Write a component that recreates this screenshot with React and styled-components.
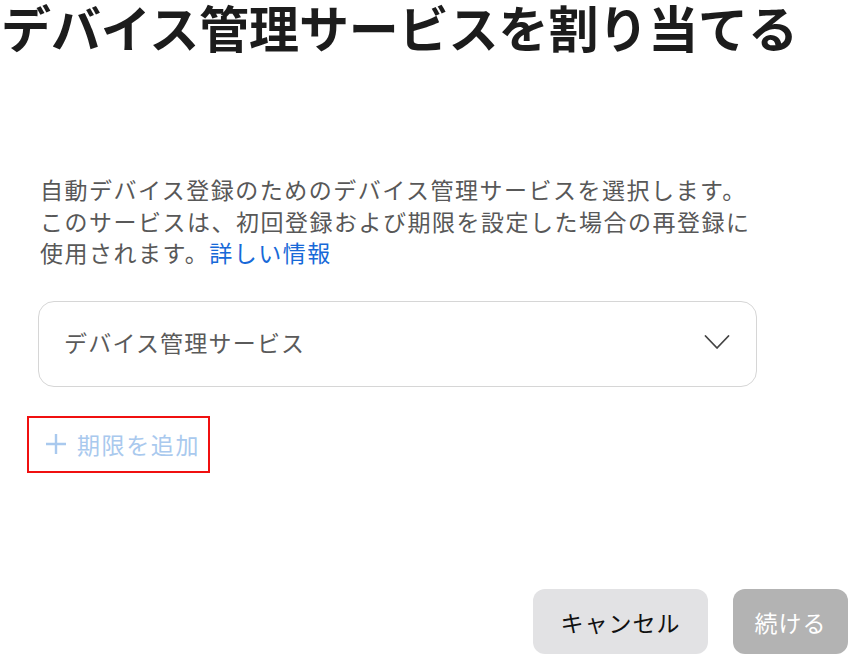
import React from "react";
import styled, { createGlobalStyle } from "styled-components";

const GlobalStyle = createGlobalStyle`
  html, body {
    margin: 0;
    padding: 0;
    background: #ffffff;
  }
  body {
    font-family: "Noto Sans CJK JP", "Noto Sans", sans-serif;
  }
`;

const Page = styled.div`
  display: flex;
  flex-direction: column;
  width: 850px;
  height: 655px;
  overflow: hidden;
`;

const Title = styled.h1`
  margin: 0;
  padding-left: 1px;
  font-size: 50px;
  line-height: 52px;
  font-weight: 700;
  color: #1c1c1c;
  letter-spacing: -0.1px;
  white-space: nowrap;
`;

const Content = styled.div`
  display: flex;
  flex-direction: column;
  align-items: flex-start;
  padding: 0 40px;
`;

const Description = styled.p`
  margin: 122px 0 0;
  width: 722px;
  font-size: 23px;
  line-height: 31.5px;
  letter-spacing: 1.5px;
  color: #585858;
`;

const Link = styled.a`
  color: #1769d8;
  text-decoration: none;
`;

const Select = styled.div`
  box-sizing: border-box;
  display: flex;
  align-items: center;
  justify-content: space-between;
  width: 719px;
  height: 86px;
  margin: 32px 0 0 -2px;
  padding: 0 26px 4px 25px;
  border: 1.5px solid #d6d6d6;
  border-radius: 16px;
  font-size: 23px;
  letter-spacing: 1.2px;
  color: #5a5a5a;
`;

const AddButton = styled.button`
  box-sizing: border-box;
  display: flex;
  align-items: center;
  gap: 10px;
  height: 57px;
  margin: 29px 0 0 -13px;
  padding: 0 8px 0 16px;
  border: 2.5px solid #f01010;
  background: transparent;
  font-family: inherit;
  font-size: 23px;
  letter-spacing: 1.6px;
  color: #a9c9ee;
  cursor: pointer;
`;

const Footer = styled.div`
  display: flex;
  justify-content: flex-end;
  gap: 25px;
  margin-top: auto;
  padding: 0 2px 1px 0;
`;

const ActionButton = styled.button`
  box-sizing: border-box;
  height: 65px;
  width: ${(p) => (p.$primary ? "115px" : "175px")};
  border: none;
  border-radius: 12px;
  background: ${(p) => (p.$primary ? "#b3b3b3" : "#e2e2e4")};
  color: ${(p) => (p.$primary ? "#ffffff" : "#111111")};
  font-family: inherit;
  font-size: 23px;
  letter-spacing: 1px;
`;

function Chevron() {
  return (
    <svg width="26" height="16" viewBox="0 0 26 16" fill="none">
      <path d="M1.5 2l11.5 12L24.5 2" stroke="#444" strokeWidth="1.8" strokeLinecap="round" strokeLinejoin="round" />
    </svg>
  );
}

function Plus() {
  return (
    <svg width="22" height="22" viewBox="0 0 22 22" fill="none">
      <path d="M11 1v20M1 11h20" stroke="#a9c9ee" strokeWidth="2.4" />
    </svg>
  );
}

export default function App() {
  return (
    <Page>
      <GlobalStyle />
      <Title>デバイス管理サービスを割り当てる</Title>
      <Content>
        <Description>
          自動デバイス登録のためのデバイス管理サービスを選択します。このサービスは、初回登録および期限を設定した場合の再登録に使用されます。
          <Link href="#">詳しい情報</Link>
        </Description>
        <Select>
          <span>デバイス管理サービス</span>
          <Chevron />
        </Select>
        <AddButton>
          <Plus />
          <span>期限を追加</span>
        </AddButton>
      </Content>
      <Footer>
        <ActionButton>キャンセル</ActionButton>
        <ActionButton $primary>続ける</ActionButton>
      </Footer>
    </Page>
  );
}
